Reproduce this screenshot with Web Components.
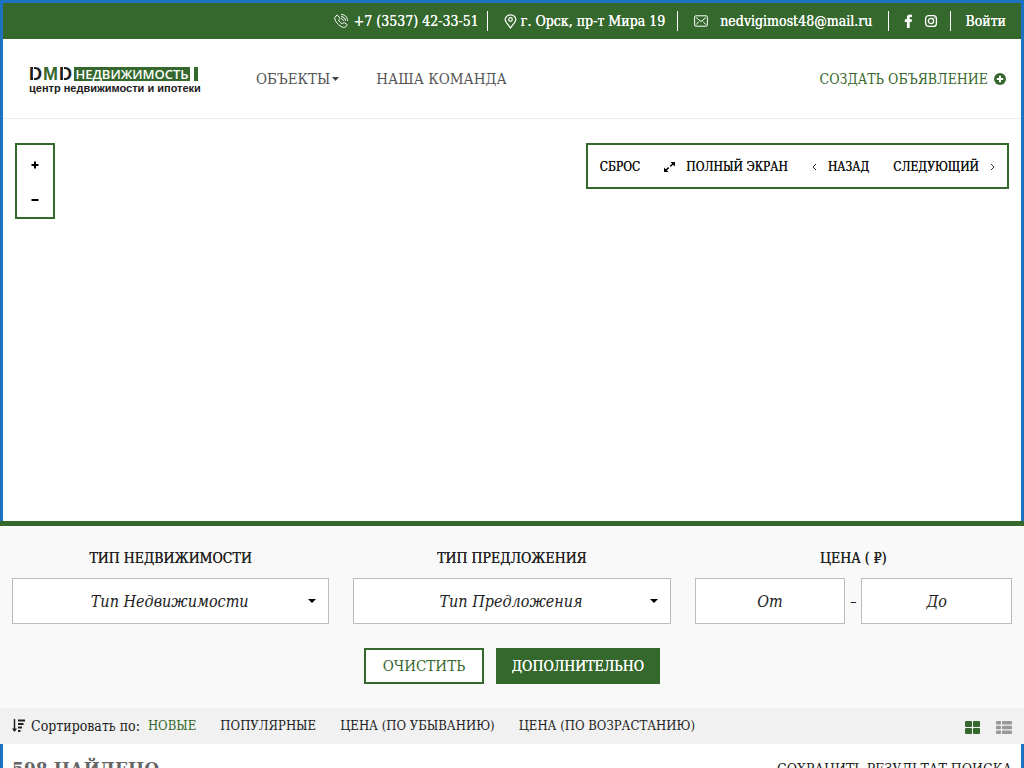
<!DOCTYPE html>
<html lang="ru">
<head>
<meta charset="utf-8">
<meta name="viewport" content="width=device-width, initial-scale=1">
<title>ДМД Недвижимость</title>
<style>
:root {
  --green: #35682d;
  --blue: #1f72c0;
  --ink: #222;
  --slab: "Roboto Slab", "DejaVu Serif Condensed", "DejaVu Serif", serif;
  --medium: 0 0 0 currentColor;
}
html { background: #fff; }
body { margin: 0; font: 14px/20px var(--slab); font-stretch: condensed; color: var(--ink); }
</style>
</head>
<body>
<estate-page></estate-page>
<script>
const define = (name, markup) => {
  const template = document.createElement('template');
  template.innerHTML = markup;
  customElements.define(name, class extends HTMLElement {
    constructor() {
      super();
      this.attachShadow({ mode: 'open' }).append(template.content.cloneNode(true));
    }
  });
};

define('top-bar', `
<style>
:host { display: flex; justify-content: flex-end; align-items: center; height: 36px; background: var(--green); color: #fff; padding-right: 15px; text-shadow: var(--medium); }
a { color: inherit; text-decoration: none; display: flex; align-items: center; white-space: nowrap; }
.item { display: flex; align-items: center; height: 20px; padding: 0 12px; border-right: 1px solid #fff; }
.item:last-child { border: 0; padding: 0 0 0 14px; }
.phone { padding-right: 8px; } .phone a { gap: 5px; }
.place { padding-left: 16px; } .place a { gap: 4px; }
.mail { padding: 0 16px; } .mail a { gap: 12px; }
.social { gap: 10px; padding-left: 14px; }
svg { display: block; }
</style>
<div class="item phone"><a href="tel:+73537423351"><svg width="16" height="16" viewBox="0 0 16 16" fill="none" stroke="#fff" stroke-linecap="round" stroke-linejoin="round"><path d="M3.800 2.500 2.300 3.500C1 5 2.200 8.200 4.800 10.900S10.500 15.200 12.500 14l1.300-1.500c.4-.6.3-1-.2-1.400l-2-1.300c-.6-.4-1-.3-1.400.2l-.7.900c-1.500-.5-3.400-2.500-3.900-3.900l.8-.7c.5-.5.5-.9.100-1.500L5.100 2.700c-.4-.5-.8-.5-1.300-.2Z"/><path d="M8.500 1.500c3.400 0 6 2.600 6 6M8.500 3.600c2.200 0 3.900 1.700 3.900 3.900M8.500 5.700c1 0 1.800.8 1.800 1.800"/></svg><span>+7 (3537) 42-33-51</span></a></div>
<div class="item place"><a href="#map"><svg width="13" height="15" viewBox="0 0 13 15" fill="none" stroke="#fff" stroke-width="1.2"><path d="M6.500 14C4.500 10.800 1.200 8.300 1.200 5.500a5.300 4.700 0 0 1 10.600 0C11.800 8.300 8.500 10.800 6.500 14Z"/><circle cx="6.500" cy="5.500" r="1.800"/></svg><span>г. Орск, пр-т Мира 19</span></a></div>
<div class="item mail"><a href="mailto:nedvigimost48@mail.ru"><svg width="14" height="12" viewBox="0 0 14 12" fill="none" stroke="#fff"><rect x=".6" y=".8" width="12.800" height="10.400" rx="1.300"/><path d="m2 2.500 5 4 5-4M2 9.700l3-3.200M12 9.700 9 6.500"/></svg><span>nedvigimost48@mail.ru</span></a></div>
<div class="item social">
<a href="#facebook" aria-label="Facebook"><svg width="11" height="14" viewBox="0 0 11 14" fill="#fff"><path d="M9 .7v2.300H7.700c-.8 0-1 .4-1 1v1.300H9L8.600 7.900H6.700V14H3.900V7.900H1.800V5.300h2.100V3.500C3.900 1.500 5.200.5 7 .5Z"/></svg></a>
<a href="#instagram" aria-label="Instagram"><svg width="14" height="14" viewBox="0 0 14 14" fill="none" stroke="#fff" stroke-width="1.300"><rect x="1.600" y="1.600" width="10.800" height="10.800" rx="3"/><circle cx="7" cy="7" r="2.600"/><circle cx="10.200" cy="3.900" r=".3" stroke-width=".8"/></svg></a></div>
<div class="item"><a href="#login">Войти</a></div>
`);

define('brand-logo', `
<style>
:host { display: block; width: 169px; padding-top: 4px; }
a { display: block; color: #1b1b1b; text-decoration: none; font-family: "Liberation Sans", sans-serif; white-space: nowrap; }
.row { display: flex; height: 14px; }
.dmd { position: relative; width: 45px; font: 700 18px/14px "Liberation Sans", sans-serif; display: flex; justify-content: space-between; padding-right: 2px; box-sizing: border-box; }
.dmd b { color: var(--green); }
.dmd svg { position: absolute; left: 0; top: 0; }
.name { width: 116px; background: var(--green); color: #fff; font: 600 13px/14px "Open Sans", "Liberation Sans", sans-serif; text-align: center; }
.bar { width: 4px; margin-left: 4px; background: var(--green); }
.sub { font-size: 11px; line-height: 14px; font-weight: 700; }
</style>
<a href="#home"><div class="row"><span class="dmd"><span>D</span><b>M</b><span>D</span><svg width="45" height="14" viewBox="0 0 45 14" stroke="#fff" fill="none"><path d="M4.500 0v14M34.500 0v14"/></svg></span><span class="name">НЕДВИЖИМОСТЬ</span><span class="bar"></span></div><div class="sub">центр недвижимости и ипотеки</div></a>
`);

define('site-header', `
<style>
:host { display: flex; align-items: center; height: 79px; padding: 0 15px 0 26px; border-bottom: 1px solid #ebebeb; }
nav { display: flex; flex: 1; gap: 37px; margin-left: 58px; font-size: 15px; }
a { color: #555; text-decoration: none; white-space: nowrap; display: flex; align-items: center; gap: 2px; }
.create { color: var(--green); gap: 6px; }
</style>
<brand-logo></brand-logo>
<nav><a href="#objects">ОБЪЕКТЫ<svg width="7" height="4" viewBox="0 0 7 4"><path d="M0 0h7L3.500 4Z" fill="#444"/></svg></a><a href="#team">НАША КОМАНДА</a></nav>
<a class="create" href="#create">СОЗДАТЬ ОБЪЯВЛЕНИЕ<svg width="12" height="12" viewBox="0 0 12 12"><circle cx="6" cy="6" r="6" fill="#35682d"/><path d="M6 2.800v6.400M2.800 6h6.400" stroke="#fff" stroke-width="2"/></svg></a>
`);

define('map-panel', `
<style>
:host { display: flex; justify-content: space-between; align-items: flex-start; box-sizing: border-box; height: 402px; padding: 24px 12px; }
.box { display: flex; border: 2px solid var(--green); background: #fff; box-sizing: border-box; padding-top: 2px; }
.zoom { flex-direction: column; width: 40px; height: 76px; }
.zoom button { flex: 1; justify-content: center; }
.tools { height: 46px; padding: 2px 12px 0; gap: 24px; }
button { display: flex; align-items: center; gap: 11px; border: 0; padding: 0; background: none; font: 12px/20px var(--slab); font-stretch: condensed; color: #111; text-shadow: var(--medium); white-space: nowrap; }
</style>
<div class="box zoom"><button aria-label="Увеличить"><svg width="8" height="8" viewBox="0 0 8 8"><path d="M4 .5v7M.5 4h7" stroke="#000" stroke-width="2"/></svg></button><button aria-label="Уменьшить"><svg width="8" height="8" viewBox="0 0 8 8"><path d="M.5 4h7" stroke="#000" stroke-width="2"/></svg></button></div>
<div class="box tools"><button>СБРОС</button>
<button><svg width="11" height="10" viewBox="0 0 11 10"><path d="M6.500 0H11v4.500ZM0 5.500V10h4.500Z"/><path d="m1.500 8.500 3.200-2.900M6.300 4.400l3.200-2.900" stroke="#000" stroke-width="1.500"/></svg>ПОЛНЫЙ ЭКРАН</button>
<button><svg width="5" height="8" viewBox="0 0 5 8" fill="none" stroke="#333"><path d="M4 1 1 4l3 3"/></svg>НАЗАД</button>
<button>СЛЕДУЮЩИЙ<svg width="5" height="8" viewBox="0 0 5 8" fill="none" stroke="#333"><path d="m1 1 3 3-3 3"/></svg></button></div>
`);

define('filter-field', `
<style>
:host { display: block; min-width: 0; text-align: center; }
</style>
<slot></slot>
`);

define('search-filters', `
<style>
:host { display: block; border-top: 5px solid var(--green); background: #f9f9f9; padding: 22px 12px 24px; }
form { display: block; }
.grid { display: grid; grid-template-columns: repeat(3, minmax(0, 1fr)); gap: 24px; }
label { display: block; line-height: 20px; margin-bottom: 10px; white-space: nowrap; text-shadow: var(--medium); }
select, input { box-sizing: border-box; width: 100%; min-width: 0; height: 46px; margin: 0; border: 1px solid #bcbcbc; border-radius: 0; background: #fff; color: var(--ink); font: italic 16px/24px var(--slab); font-stretch: condensed; text-align: center; text-align-last: center; padding: 0 12px; }
select { appearance: none; padding: 2px 14px 0 12px; }
input::placeholder { color: var(--ink); opacity: 1; }
.select { position: relative; display: block; }
.select svg { position: absolute; right: 13px; top: 21px; pointer-events: none; }
.range { display: grid; grid-template-columns: 1fr 16px 1fr; align-items: center; }
.actions { display: flex; justify-content: center; gap: 12px; margin-top: 24px; }
button { height: 36px; border: 2px solid var(--green); background: #fff; color: var(--green); font: 15px/20px var(--slab); font-stretch: condensed; padding: 0; width: 120px; white-space: nowrap; }
button.solid { background: var(--green); color: #fff; width: 164px; font-size: 14px; text-shadow: var(--medium); }
</style>
<form><div class="grid">
<filter-field><label for="kind">ТИП НЕДВИЖИМОСТИ</label><span class="select"><select id="kind"><option>Тип Недвижимости</option></select><svg width="8" height="4" viewBox="0 0 8 4"><path d="M0 0h8L4 4Z"/></svg></span></filter-field>
<filter-field><label for="offer">ТИП ПРЕДЛОЖЕНИЯ</label><span class="select"><select id="offer"><option>Тип Предложения</option></select><svg width="8" height="4" viewBox="0 0 8 4"><path d="M0 0h8L4 4Z"/></svg></span></filter-field>
<filter-field><label for="from">ЦЕНА ( ₽)</label><div class="range"><input id="from" placeholder="От"><span>–</span><input id="to" aria-label="Цена до" placeholder="До"></div></filter-field>
</div><div class="actions"><button type="reset">ОЧИСТИТЬ</button><button type="button" class="solid">ДОПОЛНИТЕЛЬНО</button></div></form>
`);

define('sort-bar', `
<style>
:host { display: flex; align-items: center; height: 36px; padding: 0 12px; background: #f1f1f1; font-size: 13px; white-space: nowrap; }
.lead { display: flex; align-items: center; gap: 6px; margin-right: 8px; font-size: 14px; }
nav { display: flex; flex: 1; gap: 24px; }
a { color: var(--ink); text-decoration: none; }
a.on { color: var(--green); }
.views { display: flex; gap: 16px; padding-top: 2px; }
svg { display: block; }
</style>
<span class="lead"><svg width="13" height="14" viewBox="0 0 13 14" fill="none" stroke="#222"><path d="M2.500 0v12" stroke-width="1.500"/><path d="M0 9.500h5L2.500 13Z" fill="#222" stroke="none"/><path d="M6 1.500h7M6 5h5.500M6 8.500h4M6 12h2.500" stroke-width="2"/></svg>Сортировать по:</span>
<nav><a class="on" href="#new">НОВЫЕ</a><a href="#popular">ПОПУЛЯРНЫЕ</a><a href="#desc">ЦЕНА (ПО УБЫВАНИЮ)</a><a href="#asc">ЦЕНА (ПО ВОЗРАСТАНИЮ)</a></nav>
<span class="views"><a href="#grid" aria-label="Сетка"><svg width="15" height="13" viewBox="0 0 15 13" fill="#35682d"><rect width="7" height="6" rx="1"/><rect x="8" width="7" height="6" rx="1"/><rect y="7" width="7" height="6" rx="1"/><rect x="8" y="7" width="7" height="6" rx="1"/></svg></a><a href="#list" aria-label="Список"><svg width="16" height="13" viewBox="0 0 16 13" fill="#999"><rect width="5" height="3.500" rx=".7"/><rect x="6" width="10" height="3.500" rx=".7"/><rect y="4.750" width="5" height="3.500" rx=".7"/><rect x="6" y="4.750" width="10" height="3.500" rx=".7"/><rect y="9.500" width="5" height="3.500" rx=".7"/><rect x="6" y="9.500" width="10" height="3.500" rx=".7"/></svg></a></span>
`);

define('results-head', `
<style>
:host { display: flex; justify-content: space-between; align-items: center; padding: 12px 9px; }
h1 { margin: 0; font-size: 19px; line-height: 26px; font-weight: 700; color: #666; }
a { color: var(--ink); text-decoration: none; line-height: 24px; }
</style>
<h1>598 НАЙДЕНО</h1><a href="#save">СОХРАНИТЬ РЕЗУЛЬТАТ ПОИСКА</a>
`);

define('estate-page', `
<style>
:host { display: block; border: 3px solid var(--blue); border-bottom: 0; }
search-filters, sort-bar { margin: 0 -3px; }
</style>
<top-bar></top-bar><site-header></site-header><main><map-panel id="map"></map-panel><search-filters></search-filters><sort-bar></sort-bar><results-head></results-head></main>
`);
</script>
</body>
</html>
